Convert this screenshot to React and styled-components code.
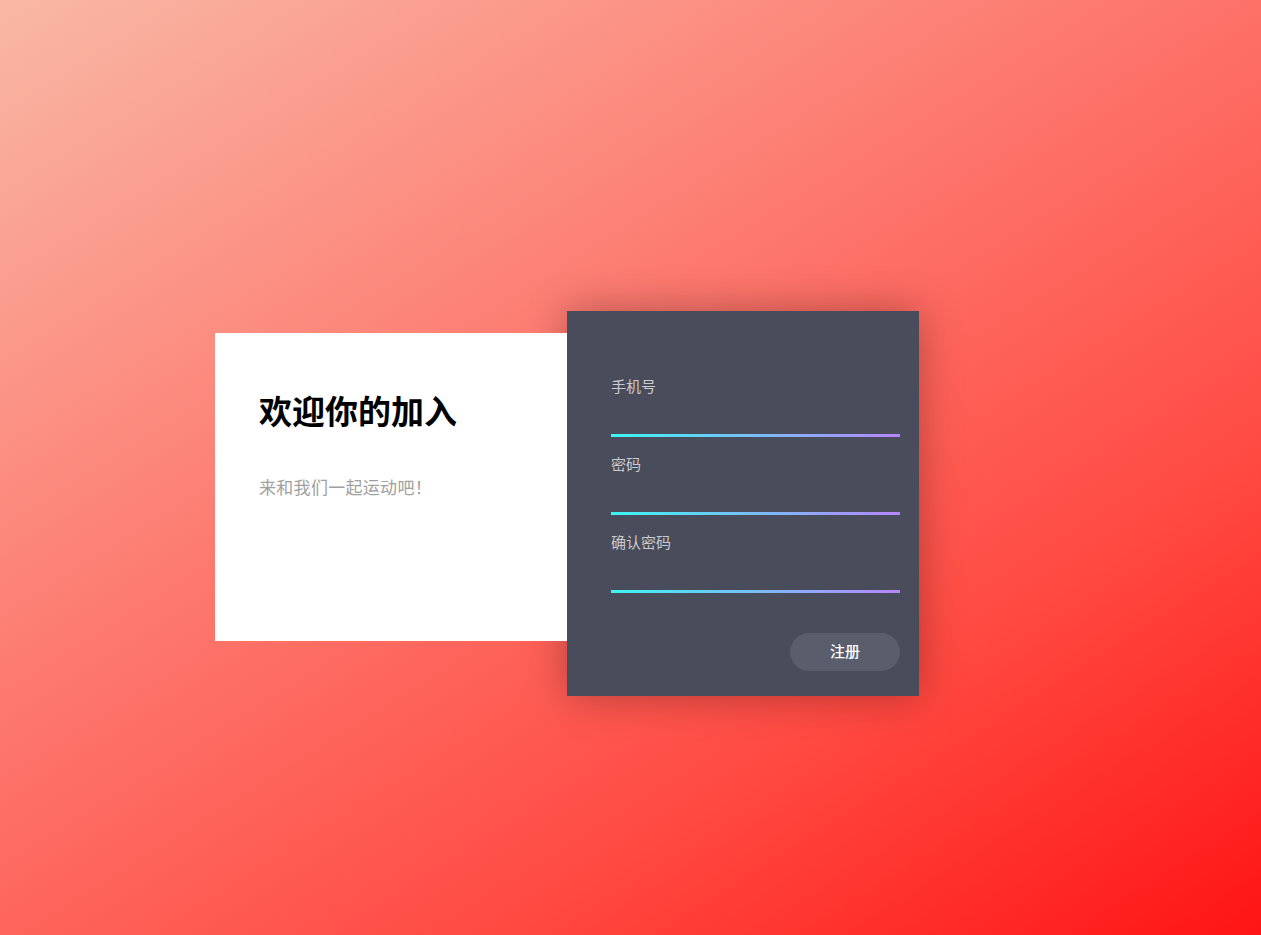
import React from 'react'
import styled, { createGlobalStyle } from 'styled-components'

const GlobalStyle = createGlobalStyle`
  html, body { margin: 0; padding: 0; }
  body {
    font-family: "Noto Sans CJK SC", "Noto Sans", sans-serif;
  }
  * { box-sizing: border-box; }
`

const Page = styled.div`
  min-height: 100vh;
  display: flex;
  align-items: center;
  justify-content: center;
  padding-top: 72px;
  background: linear-gradient(148deg, #f9b8a5 0%, #fd7a70 40%, #ff4a42 72%, #ff1414 100%);
`

const Wrap = styled.div`
  width: 831px;
  display: flex;
  align-items: flex-start;
`

const Welcome = styled.div`
  position: relative;
  z-index: 2;
  width: 352px;
  height: 308px;
  margin-top: 22px;
  padding: 57px 44px 0;
  background: #fff;
`

const Title = styled.h1`
  margin: 0;
  font-size: 33px;
  line-height: 40px;
  font-weight: 700;
  color: #000;
`

const Sub = styled.p`
  margin: 45px 0 0;
  font-size: 17px;
  line-height: 24px;
  letter-spacing: 0.3px;
  color: #a0a0a0;
`

const Panel = styled.form`
  position: relative;
  z-index: 1;
  width: 352px;
  padding: 65px 19px 25px 44px;
  background: #494c5a;
  box-shadow: 0 0 40px rgba(0, 0, 0, 0.3);
  display: flex;
  flex-direction: column;
`

const Field = styled.label`
  display: flex;
  flex-direction: column;
  margin-bottom: ${p => (p.last ? '0' : '17px')};
`

const Label = styled.span`
  font-size: 15px;
  line-height: 20px;
  color: #c9c9cf;
`

const Input = styled.input`
  height: 41px;
  width: 100%;
  padding: 0;
  border: none;
  border-bottom: 3px solid;
  border-image: linear-gradient(to right, #3cf6f2, #b884ff) 1;
  background: transparent;
  color: #fff;
  font: inherit;
  font-size: 15px;
  outline: none;
`

const Actions = styled.div`
  display: flex;
  justify-content: flex-end;
  margin-top: 40px;
`

const Button = styled.button`
  width: 110px;
  height: 38px;
  padding: 0 0 3px;
  border: none;
  border-radius: 19px;
  background: #5a5d6b;
  color: #fff;
  font-family: inherit;
  font-size: 15px;
  font-weight: 500;
  cursor: pointer;
`

const fields = ['手机号', '密码', '确认密码']

export default function App() {
  return (
    <>
      <GlobalStyle />
      <Page>
        <Wrap>
          <Welcome>
            <Title>欢迎你的加入</Title>
            <Sub>来和我们一起运动吧！</Sub>
          </Welcome>
          <Panel onSubmit={e => e.preventDefault()}>
            {fields.map((f, i) => (
              <Field key={f} last={i === fields.length - 1}>
                <Label>{f}</Label>
                <Input type={i === 0 ? 'text' : 'password'} autoComplete="off" />
              </Field>
            ))}
            <Actions>
              <Button type="submit">注册</Button>
            </Actions>
          </Panel>
        </Wrap>
      </Page>
    </>
  )
}
